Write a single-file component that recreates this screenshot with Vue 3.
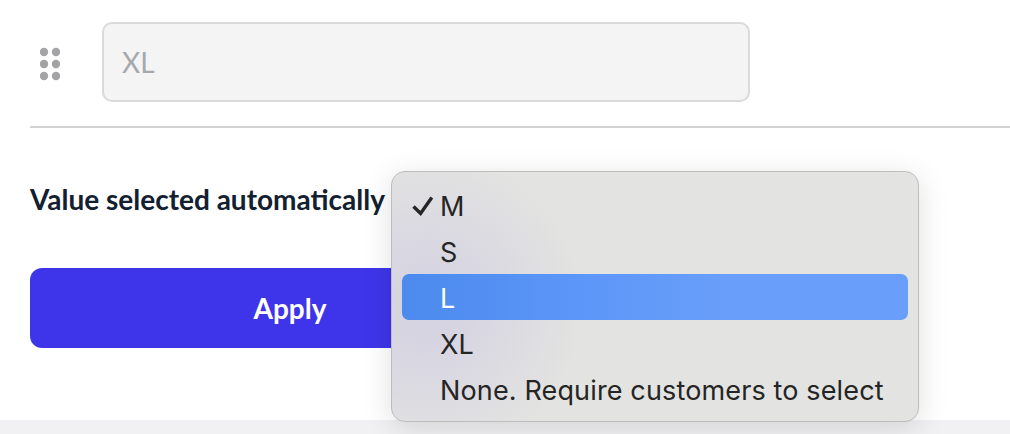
<template>
  <div class="page">
    <section class="card">
      <div class="value-row">
        <svg class="drag" width="22" height="34" viewBox="0 0 22 34">
          <circle v-for="dot in dots" :key="dot.id" :cx="dot.x" :cy="dot.y" r="4.2" fill="#a3a2a5" />
        </svg>
        <input class="value-input" type="text" placeholder="XL" disabled />
      </div>
      <hr class="divider" />
      <div class="auto-row">
        <label class="auto-label">Value selected automatically</label>
      </div>
      <button class="apply" type="button">Apply</button>
    </section>
    <footer class="footer"></footer>

    <div class="menu">
      <div
        v-for="opt in options"
        :key="opt"
        class="option"
        :class="{ active: opt === hovered }"
      >
        <svg v-if="opt === selected" class="check" width="24" height="22" viewBox="0 0 24 22">
          <path d="M2.5 10.5 L9.6 17.4 L20.8 1.5" fill="none" stroke="#252525" stroke-width="3.4" />
        </svg>
        <span>{{ opt }}</span>
      </div>
    </div>
  </div>
</template>

<script setup>
const options = ['M', 'S', 'L', 'XL', 'None. Require customers to select']
const selected = 'M'
const hovered = 'L'

const dots = []
for (let row = 0; row < 3; row++) {
  for (let col = 0; col < 2; col++) {
    dots.push({ id: `${row}-${col}`, x: 4 + col * 12, y: 5 + row * 12 })
  }
}
</script>

<style>
html,
body {
  margin: 0;
  background: #fff;
}
</style>

<style scoped>
.page {
  position: relative;
  width: 1010px;
  height: 434px;
  overflow: hidden;
  display: flex;
  flex-direction: column;
  background: #f1f0f3;
  font-family: Lato, "Liberation Sans", sans-serif;
}

.card {
  height: 420px;
  box-sizing: border-box;
  padding: 22px 0 0 30px;
  background: #fff;
}

.value-row {
  display: flex;
  align-items: center;
  gap: 40px;
  padding-left: 10px;
}

.drag {
  flex: none;
  margin-top: 4px;
}

.value-input {
  width: 648px;
  height: 80px;
  box-sizing: border-box;
  padding: 0 18px;
  background: #f4f4f4;
  border: 2px solid #dadada;
  border-radius: 10px;
  font-family: Lato, sans-serif;
  font-size: 28px;
}

.value-input::placeholder {
  color: #a6a8ad;
  opacity: 1;
}

.divider {
  height: 2px;
  margin: 24px 0 0;
  border: none;
  background: #d2d2d2;
}

.auto-row {
  margin-top: 54px;
  height: 34px;
  display: flex;
  align-items: center;
}

.auto-label {
  color: #12202f;
  font-size: 28px;
  font-weight: 700;
}

.apply {
  display: block;
  width: 520px;
  height: 80px;
  margin-top: 52px;
  border: none;
  border-radius: 12px;
  background: #3e35eb;
  color: #fff;
  font-family: Lato, sans-serif;
  font-size: 28px;
  font-weight: 700;
}

.footer {
  flex: 1;
}

.menu {
  position: absolute;
  left: 391px;
  top: 171px;
  width: 528px;
  height: 251px;
  box-sizing: border-box;
  padding: 10px 10px;
  background:
    radial-gradient(circle 155px at 35px 135px, rgba(176, 166, 226, 0.3), rgba(176, 166, 226, 0.13) 60%, rgba(176, 166, 226, 0) 100%),
    #e3e3e1;
  border: 1px solid #bdbdbb;
  border-radius: 14px;
  box-shadow: 0 6px 30px rgba(0, 0, 0, 0.13);
  font-family: Inter, Roboto, sans-serif;
  font-size: 27px;
  letter-spacing: 0.14px;
  color: #252525;
}

.option {
  position: relative;
  height: 46px;
  box-sizing: border-box;
  display: flex;
  align-items: center;
  padding: 2px 0 0 38px;
  border-radius: 7px;
}

.option.active {
  background: linear-gradient(90deg, #4c8aee, #5c96f8 35%, #699ffa 65%);
  color: #fff;
}

.check {
  position: absolute;
  left: 9px;
  top: 14px;
}
</style>
